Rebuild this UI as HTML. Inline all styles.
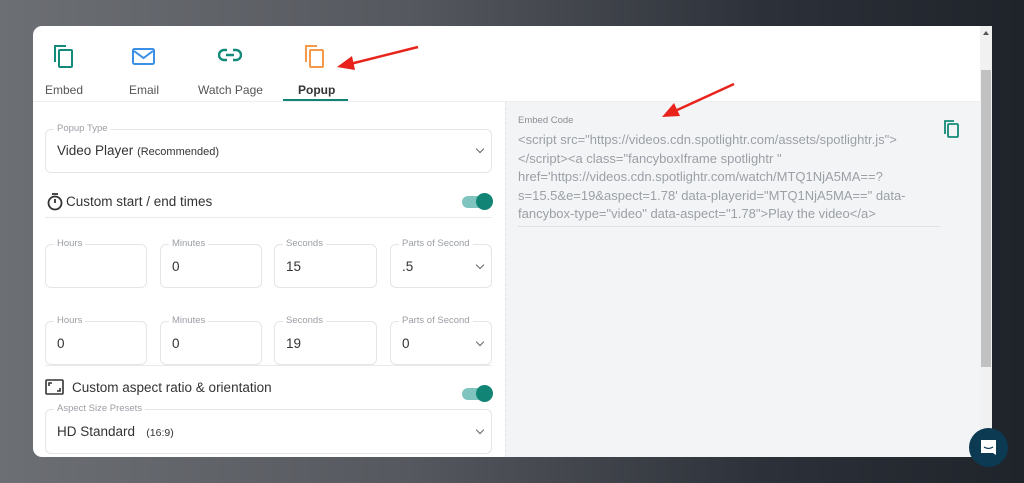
<!DOCTYPE html><html><head><style>
*{margin:0;padding:0;box-sizing:border-box}
body{width:1024px;height:483px;overflow:hidden;font-family:"Liberation Sans",sans-serif;background:linear-gradient(90deg,#6c6f74 0%,#55585e 40%,#2c3038 75%,#1f232a 100%);position:relative}
.a{position:absolute}
.modal{left:33px;top:26px;width:959px;height:431px;background:#fff;border-radius:9px 0 0 9px;overflow:hidden}
.tab{position:absolute;font-size:12px;color:#555;text-align:center}
.box{position:absolute;border:1px solid #e3e5e8;border-radius:6px;background:#fff}
.lbl{position:absolute;top:-7px;left:8px;background:#fff;padding:0 3px;font-size:9.5px;color:#9a9ea4}
.val{position:absolute;left:11px;font-size:13.5px;color:#333}
.chev{position:absolute;right:8px;width:6px;height:6px;border-right:1.3px solid #666;border-bottom:1.3px solid #666;transform:rotate(45deg)}
.tog{position:absolute;width:30px;height:12px;border-radius:6px;background:#7fc4be}
.tog:after{content:"";position:absolute;right:-1px;top:-3px;width:17px;height:17px;border-radius:50%;background:#128475}
</style></head><body>
<div class="a modal">
 <svg class="a" style="left:19px;top:17px" width="24" height="26" viewBox="0 0 24 26" fill="none" stroke="#138a7a" stroke-width="2"><path d="M3 19V3h11"/><rect x="7" y="7" width="13" height="17" rx="1"/></svg>
 <svg class="a" style="left:99px;top:22px" width="24" height="18" viewBox="0 0 24 18" fill="none" stroke="#3b8fe6" stroke-width="2"><rect x="1" y="1" width="21" height="15" rx="1.5"/><path d="M2 3l9.5 7L21 3"/></svg>
 <svg class="a" style="left:185px;top:22px" width="24" height="14" viewBox="0 0 24 14" fill="none" stroke="#138a7a" stroke-width="2.4"><path d="M9 2H6a5 5 0 0 0 0 10h3M15 2h3a5 5 0 0 1 0 10h-3M8 7h8"/></svg>
 <svg class="a" style="left:270px;top:17px" width="24" height="26" viewBox="0 0 24 26" fill="none" stroke="#f49a4a" stroke-width="2"><path d="M3 19V3h11"/><rect x="7" y="7" width="13" height="17" rx="1"/></svg>
 <div class="tab" style="left:12px;top:57px">Embed</div>
 <div class="tab" style="left:96px;top:57px">Email</div>
 <div class="tab" style="left:165px;top:57px">Watch Page</div>
 <div class="tab" style="left:265px;top:57px;color:#333;font-weight:bold">Popup</div>
 <div class="a" style="left:250px;top:73px;width:65px;height:2px;background:#128475"></div>
 <div class="a" style="left:0;top:75px;width:959px;height:1px;background:#eceef0"></div>
 <div class="a" style="left:472px;top:76px;width:475px;height:355px;background:#f3f4f6;border-left:1px dashed #e2e4e7"></div>
 <div class="a" style="left:485px;top:89px;font-size:9.5px;color:#8a8e94">Embed Code</div>
 <div class="a" style="left:485px;top:105px;width:410px;font-size:13px;line-height:18.5px;color:#9ba0a6">&lt;script src="https://videos.cdn.spotlightr.com/assets/spotlightr.js"&gt; &lt;/script&gt;&lt;a class="fancyboxIframe spotlightr " href='https://videos.cdn.spotlightr.com/watch/MTQ1NjA5MA==?s=15.5&amp;e=19&amp;aspect=1.78' data-playerid="MTQ1NjA5MA==" data-fancybox-type="video" data-aspect="1.78"&gt;Play the video&lt;/a&gt;</div>
 <div class="a" style="left:485px;top:200px;width:422px;height:1px;background:#dfe1e4"></div>
 <svg class="a" style="left:910px;top:93px" width="18" height="20" viewBox="0 0 18 20" fill="none" stroke="#138a7a" stroke-width="1.8"><path d="M2 15V2h9"/><rect x="5" y="5" width="10" height="13" rx="1"/></svg>
 <div class="a" style="left:947px;top:0;width:12px;height:431px;background:#f1f1f1"></div>
 <div class="a" style="left:948px;top:44px;width:10px;height:297px;background:#c1c1c1"></div>
 <div class="a" style="left:950px;top:5px;width:0;height:0;border-left:3px solid transparent;border-right:3px solid transparent;border-bottom:4px solid #555"></div>
 <div class="box" style="left:12px;top:103px;width:447px;height:44px"><div class="lbl">Popup Type</div><div class="val" style="top:13px">Video Player <span style="font-size:11px">(Recommended)</span></div><div class="chev" style="top:16px"></div></div>
 <svg class="a" style="left:13px;top:166px" width="18" height="19" viewBox="0 0 18 19" fill="none" stroke="#333" stroke-width="1.8"><circle cx="9" cy="11" r="6.5"/><path d="M6 2h6M9 11V7"/></svg>
 <div class="a" style="left:33px;top:168px;font-size:13.5px;color:#333">Custom start / end times</div>
 <div class="tog" style="left:429px;top:170px"></div>
 <div class="a" style="left:12px;top:191px;width:447px;height:1px;background:#e8eaec"></div>
 <div class="box" style="left:12px;top:218px;width:102px;height:44px"><div class="lbl">Hours</div></div>
 <div class="box" style="left:127px;top:218px;width:102px;height:44px"><div class="lbl">Minutes</div><div class="val" style="top:14px">0</div></div>
 <div class="box" style="left:241px;top:218px;width:103px;height:44px"><div class="lbl">Seconds</div><div class="val" style="top:14px">15</div></div>
 <div class="box" style="left:357px;top:218px;width:102px;height:44px"><div class="lbl">Parts of Second</div><div class="val" style="top:14px">.5</div><div class="chev" style="top:17px"></div></div>
 <div class="box" style="left:12px;top:295px;width:102px;height:44px"><div class="lbl">Hours</div><div class="val" style="top:14px">0</div></div>
 <div class="box" style="left:127px;top:295px;width:102px;height:44px"><div class="lbl">Minutes</div><div class="val" style="top:14px">0</div></div>
 <div class="box" style="left:241px;top:295px;width:103px;height:44px"><div class="lbl">Seconds</div><div class="val" style="top:14px">19</div></div>
 <div class="box" style="left:357px;top:295px;width:102px;height:44px"><div class="lbl">Parts of Second</div><div class="val" style="top:14px">0</div><div class="chev" style="top:17px"></div></div>
 <div class="a" style="left:12px;top:339px;width:447px;height:1px;background:#e8eaec"></div>
 <svg class="a" style="left:12px;top:353px" width="19" height="16" viewBox="0 0 19 16" fill="none" stroke="#333" stroke-width="1.6"><rect x="1" y="1" width="17" height="14" rx="1"/><path d="M4 7V4h3M15 9v3h-3"/></svg>
 <div class="a" style="left:39px;top:354px;font-size:13.5px;color:#333">Custom aspect ratio &amp; orientation</div>
 <div class="tog" style="left:429px;top:362px"></div>
 <div class="box" style="left:12px;top:383px;width:447px;height:45px"><div class="lbl">Aspect Size Presets</div><div class="val" style="top:14px">HD Standard &nbsp; <span style="font-size:10.5px">(16:9)</span></div><div class="chev" style="top:17px"></div></div>
</div>
<div class="a" style="left:969px;top:428px;width:39px;height:39px;border-radius:50%;background:#0b3a52"></div>
<svg class="a" style="left:979px;top:438px" width="19" height="19" viewBox="0 0 19 19"><path d="M2 2h15v15l-3-2H2z" fill="#fff"/><path d="M5 9q4.5 3 9 0" stroke="#0b3a52" stroke-width="1.3" fill="none"/></svg>
<svg class="a" style="left:0;top:0" width="1024" height="483"><g stroke="#e8231c" stroke-width="2.5" fill="#e8231c"><line x1="418" y1="47" x2="350" y2="64"/><polygon points="337,67 352,56 355,70" stroke="none"/><line x1="734" y1="84" x2="675" y2="111"/><polygon points="662,117 674,103 680,116" stroke="none"/></g></svg>
</body></html>
